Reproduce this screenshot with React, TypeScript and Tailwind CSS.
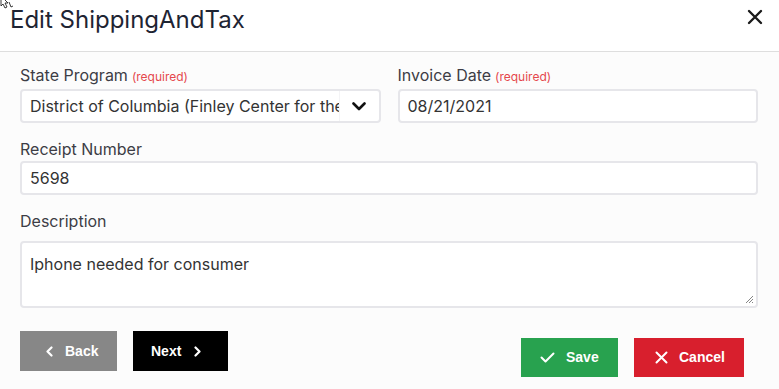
import React from "react";

const inter = { fontFamily: "Inter, 'Noto Sans', sans-serif" };
const arial = { fontFamily: "'Liberation Sans', Arial, sans-serif" };

function Label({ text, required }: { text: string; required?: boolean }) {
  return (
    <div className="text-[16px] leading-[20px] text-[#3d3d45]">
      {text}
      {required && <span className="ml-[4px] text-[12px] text-[#e5484d]">(required)</span>}
    </div>
  );
}

function Chevron({ dir }: { dir: "left" | "right" | "down" }) {
  if (dir === "down")
    return (
      <svg width="14" height="9" viewBox="0 0 14 9">
        <path d="M1.5 1.5 L7 7 L12.5 1.5" fill="none" stroke="#111" strokeWidth="2.6" strokeLinecap="round" strokeLinejoin="round" />
      </svg>
    );
  return (
    <svg width="7" height="11" viewBox="0 0 7 11">
      <path
        d={dir === "left" ? "M5.5 1.5 L1.5 5.5 L5.5 9.5" : "M1.5 1.5 L5.5 5.5 L1.5 9.5"}
        fill="none"
        stroke="#fff"
        strokeWidth="2.2"
        strokeLinecap="round"
        strokeLinejoin="round"
      />
    </svg>
  );
}

export default function App() {
  return (
    <div className="relative w-[779px] h-[389px] bg-[#fcfcfc] overflow-hidden" style={inter}>
      {/* mouse pointer remnant */}
      <svg className="absolute left-0 top-0" width="14" height="9" viewBox="0 0 14 9">
        <path d="M1 0 L1 6 L3 4 L5 8 L7 7 L5 3 L8 3 L3 -2 Z" fill="#fff" stroke="#222" strokeWidth="0.9" />
        <path d="M9 2 L11 7 L13 6" fill="none" stroke="#222" strokeWidth="0.9" />
      </svg>

      <div className="flex items-start justify-between h-[52px] border-b border-[#dedede] bg-white pl-[10px] pr-[16px] pt-[6px]">
        <h1 className="text-[24px] leading-[28px] text-[#1e2433]">Edit ShippingAndTax</h1>
        <svg className="mt-[3px]" width="16" height="16" viewBox="0 0 16 16">
          <path d="M2 2 L14 14 M14 2 L2 14" stroke="#1a1a1a" strokeWidth="2.4" strokeLinecap="round" />
        </svg>
      </div>

      <div className="pl-[20px] pr-[21px] pt-[13px]">
        <div className="grid grid-cols-2 gap-[17px]">
          <div>
            <Label text="State Program" required />
            <div className="mt-[2px] flex h-[34px] items-center rounded-[4px] border-2 border-[#e6e6ea] bg-white">
              <div className="flex-1 overflow-hidden whitespace-nowrap pl-[8px] pr-[8px] text-[16px] text-[#333]">
                District of Columbia (Finley Center for the Blind)
              </div>
              <div className="flex h-full w-[40px] items-center justify-center border-l border-[#f4f4f6]">
                <Chevron dir="down" />
              </div>
            </div>
          </div>
          <div>
            <Label text="Invoice Date" required />
            <div className="mt-[2px] flex h-[34px] items-center rounded-[4px] border-2 border-[#e6e6ea] bg-white pl-[8px] text-[16px] text-[#333]">
              08/21/2021
            </div>
          </div>
        </div>

        <div className="mt-[16px]">
          <Label text="Receipt Number" />
          <div className="mt-[2px] flex h-[34px] items-center rounded-[4px] border-2 border-[#e6e6ea] bg-white pl-[8px] text-[16px] text-[#333]">
            5698
          </div>
        </div>

        <div className="mt-[16px]">
          <Label text="Description" />
          <div className="relative mt-[10px] h-[67px] rounded-[4px] border-2 border-[#e6e6ea] bg-white pl-[8px] pt-[11px] text-[16px] leading-[20px] text-[#333]">
            Iphone needed for consumer
            <svg className="absolute bottom-[2px] right-[2px]" width="9" height="9" viewBox="0 0 9 9">
              <path d="M8 1 L1 8 M8 4 L4 8 M8 7 L7 8" stroke="#777" strokeWidth="0.9" />
            </svg>
          </div>
        </div>

        <div className="mt-[23px] flex items-start justify-between" style={arial}>
          <div className="flex gap-[16px]">
            <button className="flex h-[40px] w-[97px] items-center gap-[12px] bg-[#878787] pl-[26px] text-[14px] font-bold text-white">
              <Chevron dir="left" />
              <span>Back</span>
            </button>
            <button className="flex h-[40px] w-[95px] items-center gap-[13px] bg-black pl-[18px] text-[14px] font-bold text-white">
              <span>Next</span>
              <Chevron dir="right" />
            </button>
          </div>
          <div className="mr-[14px] mt-[7px] flex gap-[16px]">
            <button className="flex h-[39px] w-[97px] items-center gap-[11px] bg-[#28a24f] pl-[19px] text-[14px] font-bold text-white">
              <svg width="15" height="11" viewBox="0 0 15 11">
                <path d="M1.5 5.5 L5.5 9.5 L13.5 1.5" fill="none" stroke="#fff" strokeWidth="2" strokeLinecap="round" strokeLinejoin="round" />
              </svg>
              <span>Save</span>
            </button>
            <button className="flex h-[39px] w-[110px] items-center gap-[11px] bg-[#d81f2d] pl-[21px] text-[14px] font-bold text-white">
              <svg width="13" height="13" viewBox="0 0 13 13">
                <path d="M1.5 1.5 L11.5 11.5 M11.5 1.5 L1.5 11.5" stroke="#fff" strokeWidth="2" strokeLinecap="round" />
              </svg>
              <span>Cancel</span>
            </button>
          </div>
        </div>
      </div>
    </div>
  );
}
